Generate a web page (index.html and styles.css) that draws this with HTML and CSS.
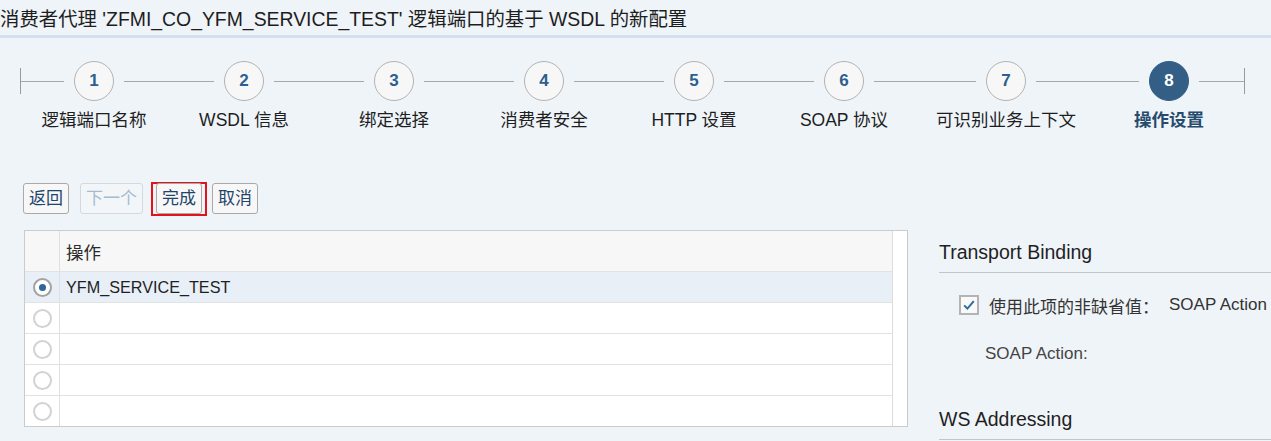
FILE: index.html
```html
<!DOCTYPE html>
<html lang="zh">
<head>
<meta charset="utf-8">
<title>WSDL 新配置</title>
<link rel="stylesheet" href="styles.css">
</head>
<body>
<div class="title">消费者代理 'ZFMI_CO_YFM_SERVICE_TEST' 逻辑端口的基于 WSDL 的新配置</div>

<div class="stepper">
  <span class="tick"></span><span class="line line-edge"></span>
  <div class="step"><div class="circle">1</div><div class="label">逻辑端口名称</div></div>
  <span class="line"></span>
  <div class="step"><div class="circle">2</div><div class="label">WSDL 信息</div></div>
  <span class="line"></span>
  <div class="step"><div class="circle">3</div><div class="label">绑定选择</div></div>
  <span class="line"></span>
  <div class="step"><div class="circle">4</div><div class="label">消费者安全</div></div>
  <span class="line"></span>
  <div class="step"><div class="circle">5</div><div class="label">HTTP 设置</div></div>
  <span class="line"></span>
  <div class="step"><div class="circle">6</div><div class="label">SOAP 协议</div></div>
  <span class="line line-wide"></span>
  <div class="step"><div class="circle">7</div><div class="label">可识别业务上下文</div></div>
  <span class="line line-wider"></span>
  <div class="step step-active"><div class="circle">8</div><div class="label">操作设置</div></div>
  <span class="line line-edge line-end"></span><span class="tick"></span>
</div>

<div class="toolbar">
  <button class="btn">返回</button>
  <button class="btn btn-disabled">下一个</button>
  <span class="mark"><button class="btn">完成</button></span>
  <button class="btn">取消</button>
</div>

<div class="main">
  <div class="grid">
    <div class="rows">
      <div class="row row-head"><div class="sel"></div><div class="cell">操作</div></div>
      <div class="row row-selected"><div class="sel"><span class="radio radio-on"></span></div><div class="cell">YFM_SERVICE_TEST</div></div>
      <div class="row"><div class="sel"><span class="radio"></span></div><div class="cell"></div></div>
      <div class="row"><div class="sel"><span class="radio"></span></div><div class="cell"></div></div>
      <div class="row"><div class="sel"><span class="radio"></span></div><div class="cell"></div></div>
      <div class="row row-last"><div class="sel"><span class="radio"></span></div><div class="cell"></div></div>
    </div>
    <div class="scroll"></div>
  </div>

  <div class="panel">
    <div class="sec-head">Transport Binding</div>
    <div class="opt">
      <span class="checkbox"><svg width="16" height="16" viewBox="0 0 16 16"><path d="M3.2 8.4 L6.4 11.6 L12.8 4.2" fill="none" stroke="#2f6aa0" stroke-width="2"/></svg></span>
      <span class="opt-text">使用此项的非缺省值：</span><span class="opt-value">SOAP Action</span>
    </div>
    <div class="field">SOAP Action:</div>
    <div class="sec-head sec-second">WS Addressing</div>
  </div>
</div>
</body>
</html>
```

FILE: styles.css
```css
* { box-sizing: border-box; }
html, body { margin: 0; padding: 0; }
body {
  width: 1271px;
  height: 441px;
  overflow: hidden;
  background: #eff4f9;
  font-family: "Liberation Sans", "Noto Sans CJK SC", sans-serif;
  color: #222;
}

.title {
  height: 38px;
  padding-top: 3px;
  line-height: 32px;
  font-size: 19.4px;
  color: #1d1d1d;
  border-bottom: 3px solid #d4e0ed;
  white-space: nowrap;
}

.stepper {
  display: flex;
  align-items: flex-start;
  padding-left: 20px;
  margin-top: 23px;
  height: 80px;
}
.tick {
  width: 1px;
  height: 26px;
  margin-top: 7px;
  background: #9a9a9a;
  flex: none;
}
.line {
  flex: none;
  width: 90px;
  height: 1px;
  margin: 20px 10px 0;
  background: #a8a8a8;
}
.line-edge { width: 43px; margin-left: 0; }
.line-end { margin-left: 10px; margin-right: 0; width: 45px; }
.line-wide { width: 102px; }
.line-wider { width: 103px; }

.step {
  width: 40px;
  flex: none;
  display: flex;
  flex-direction: column;
  align-items: center;
}
.circle {
  width: 40px;
  height: 40px;
  border-radius: 50%;
  border: 1px solid #b3b3b3;
  background: #f7f7f7;
  color: #2b5f8e;
  font-weight: bold;
  font-size: 17px;
  display: flex;
  align-items: center;
  justify-content: center;
}
.label {
  margin-top: 8px;
  line-height: 22px;
  font-size: 17.5px;
  white-space: nowrap;
  color: #1e1e1e;
}
.step-active .circle {
  background: #335f86;
  border-color: #335f86;
  color: #fff;
}
.step-active .label {
  font-weight: bold;
  color: #274b6c;
}

.toolbar {
  display: flex;
  align-items: center;
  gap: 11px;
  padding-left: 23px;
  margin-top: 42px;
  height: 31px;
}
.btn {
  height: 31px;
  padding: 0 5px;
  border: 1px solid #a9a9a9;
  border-radius: 3px;
  background: #f7f7f7;
  font-family: inherit;
  font-size: 17px;
  color: #1e456c;
  line-height: 29px;
  flex: none;
}
.btn-disabled {
  color: #a6bbcf;
  border-color: #d3d9df;
  background: #f3f6f9;
}
.mark {
  display: flex;
  align-items: center;
  height: 34px;
  padding: 0 3px;
  border: 2px solid #e3131d;
  margin-left: -3px;
  margin-right: -6px;
}

.main {
  display: flex;
  align-items: flex-start;
  margin-top: 16px;
  padding-left: 24px;
}
.grid {
  flex: none;
  width: 884px;
  display: flex;
  border: 1px solid #cbcbcb;
  background: #fff;
}
.rows { flex: 1; }
.row {
  display: flex;
  height: 31px;
  border-bottom: 1px solid #e2e2e2;
}
.row-last { height: 30px; border-bottom: none; }
.row-head { height: 41px; background: #f7f7f7; }
.row-selected { background: #e8eff7; }
.sel {
  width: 35px;
  flex: none;
  border-right: 1px solid #e0e0e0;
  display: flex;
  align-items: center;
  justify-content: center;
}
.cell {
  flex: 1;
  padding-left: 6px;
  display: flex;
  align-items: center;
  font-size: 16.2px;
  color: #1f1f1f;
}
.row-head .cell { font-size: 17.5px; color: #2a2a2a; }
.radio {
  width: 19px;
  height: 19px;
  border-radius: 50%;
  border: 2px solid #d2d2d2;
  background: #fff;
  display: flex;
  align-items: center;
  justify-content: center;
}
.radio-on { border-color: #a2a2a2; }
.radio-on::after {
  content: "";
  width: 7px;
  height: 7px;
  border-radius: 50%;
  background: #2f659a;
}
.scroll {
  width: 15px;
  flex: none;
  border-left: 1px solid #dcdcdc;
  background: #fff;
}

.panel {
  flex: none;
  width: 400px;
  margin-left: 31px;
}
.sec-head {
  height: 43px;
  padding-top: 2px;
  border-bottom: 1px solid #c6c6c6;
  display: flex;
  align-items: center;
  font-size: 19.5px;
  color: #1f1f1f;
  white-space: nowrap;
}
.sec-second { margin-top: 33px; }
.opt {
  margin-top: 22px;
  height: 20px;
  display: flex;
  align-items: center;
  padding-left: 20px;
  white-space: nowrap;
  font-size: 17px;
  color: #333;
}
.checkbox {
  width: 20px;
  height: 20px;
  flex: none;
  border: 2px solid #b4b4b4;
  background: #f9f9f9;
  display: flex;
  align-items: center;
  justify-content: center;
}
.opt-text { margin-left: 10px; }
.opt-value { margin-left: 10px; }
.field {
  margin-top: 29px;
  height: 20px;
  line-height: 20px;
  padding-left: 46px;
  font-size: 17px;
  color: #444;
}
```
